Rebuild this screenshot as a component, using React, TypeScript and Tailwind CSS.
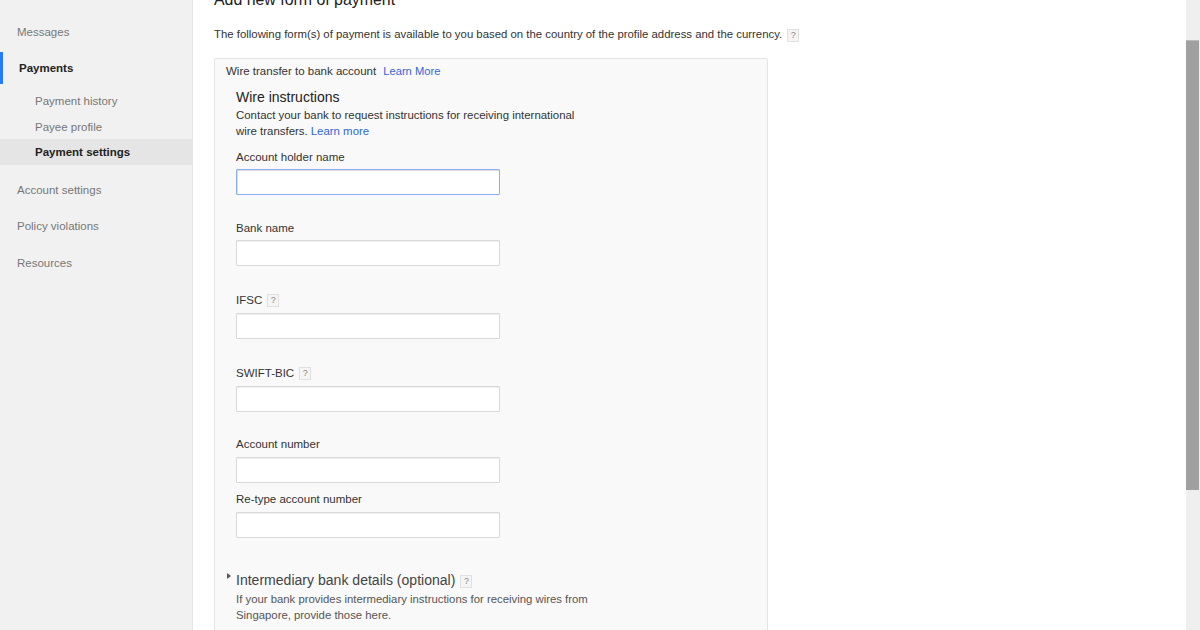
import type { ReactNode } from 'react'

const FONT = "font-['Liberation_Sans',Arial,sans-serif]"

function HelpIcon() {
    return (
        <span className="inline-flex h-[13px] w-[12px] items-center justify-center border border-[#e0e0e0] bg-[#f5f5f5] text-[9px] leading-none text-[#888]">
            ?
        </span>
    )
}

function NavItem({ label, className }: { label: string; className: string }) {
    return <div className={`flex items-center pt-[2px] text-[11.5px] text-[#777] ${className}`}>{label}</div>
}

function Field({ label, help, labelClass, children }: { label: string; help?: boolean; labelClass: string; children?: ReactNode }) {
    return (
        <div className={labelClass}>
            <div className="flex h-[14px] items-center gap-[5px] text-[11.5px] leading-[14px] text-[#333]">
                {label}
                {help && <HelpIcon />}
            </div>
            {children}
        </div>
    )
}

function TextBox({ focused, className }: { focused?: boolean; className: string }) {
    const border = focused
        ? 'border-[#8aaef5] shadow-[inset_1px_1px_1px_#ddd]'
        : 'border-[#d9d9d9] shadow-[inset_0_1px_0_#f0f0f0]'
    return <div className={`h-[26px] w-[264px] rounded-[1px] border bg-white ${border} ${className}`} />
}

export default function App() {
    return (
        <div className={`flex h-[630px] w-[1200px] overflow-hidden bg-white ${FONT}`}>
            {/* Sidebar */}
            <aside className="h-full w-[193px] shrink-0 border-r border-[#e5e5e5] bg-[#f1f1f1] pt-[20px]">
                <NavItem label="Messages" className="h-[24px] pl-[17px]" />
                <div className="mt-[8px] flex h-[32px] items-center border-l-[3px] border-[#2a7bf0] pl-[16px] pt-[2px] text-[11.5px] font-bold text-[#222]">
                    Payments
                </div>
                <NavItem label="Payment history" className="mt-[4px] h-[26px] pl-[35px]" />
                <NavItem label="Payee profile" className="h-[25px] pl-[35px]" />
                <div className="flex h-[26px] items-center bg-[#e5e5e5] pl-[35px] pt-[2px] text-[11.5px] font-bold text-[#222]">
                    Payment settings
                </div>
                <NavItem label="Account settings" className="mt-[12px] h-[26px] pl-[17px]" />
                <NavItem label="Policy violations" className="mt-[10px] h-[26px] pl-[17px]" />
                <NavItem label="Resources" className="mt-[11px] h-[26px] pl-[17px]" />
            </aside>

            {/* Main content */}
            <main className="min-w-0 flex-1 pl-[21px]">
                <h2 className="-mt-[10px] h-[20px] text-[15.9px] font-normal leading-[20px] text-[#222]">Add new form of payment</h2>
                <p className="mt-[18px] flex h-[14px] items-center gap-[5px] text-[11.38px] text-[#333]">
                    The following form(s) of payment is available to you based on the country of the profile address and the currency.
                    <HelpIcon />
                </p>

                <section className="mt-[16px] h-[620px] w-[554px] rounded-t-[2px] border border-[#e5e5e5] bg-[#f9f9f9] pl-[11px] pt-[5px]">
                    <div className="flex h-[14px] items-center text-[11.5px] leading-[14px] text-[#333]">
                        Wire transfer to bank account
                        <a className="ml-[7px] text-[11.2px] text-[#3367d6]">Learn More</a>
                    </div>

                    <div className="pl-[10px]">
                        <h3 className="mt-[9px] h-[20px] text-[14px] font-normal leading-[20px] text-[#222]">Wire instructions</h3>
                        <div className="text-[11.43px] leading-[16px] text-[#333]">
                            <div>Contact your bank to request instructions for receiving international</div>
                            <div className="flex gap-[3px]">
                                <span>wire transfers.</span>
                                <a className="text-[#3367d6]">Learn more</a>
                            </div>
                        </div>

                        <Field label="Account holder name" labelClass="mt-[11px]">
                            <TextBox focused className="mt-[5px]" />
                        </Field>
                        <Field label="Bank name" labelClass="mt-[26px]">
                            <TextBox className="mt-[5px]" />
                        </Field>
                        <Field label="IFSC" help labelClass="mt-[27px]">
                            <TextBox className="mt-[6px]" />
                        </Field>
                        <Field label="SWIFT-BIC" help labelClass="mt-[27px]">
                            <TextBox className="mt-[6px]" />
                        </Field>
                        <Field label="Account number" labelClass="mt-[25px]">
                            <TextBox className="mt-[6px]" />
                        </Field>
                        <Field label="Re-type account number" labelClass="mt-[9px]">
                            <TextBox className="mt-[6px]" />
                        </Field>

                        <div className="relative mt-[32px]">
                            <span className="absolute -left-[9px] top-[3px] h-0 w-0 border-y-[3px] border-l-[4px] border-y-transparent border-l-[#555]" />
                            <div className="flex h-[20px] items-center gap-[5px] pt-[2px] text-[14.05px] text-[#444]">
                                Intermediary bank details (optional)
                                <HelpIcon />
                            </div>
                        </div>
                        <div className="mt-[1px] text-[11.35px] leading-[16px] text-[#555]">
                            <div>If your bank provides intermediary instructions for receiving wires from</div>
                            <div>Singapore, provide those here.</div>
                        </div>
                    </div>
                </section>
            </main>

            {/* Scrollbar */}
            <div className="h-full w-[14px] shrink-0 bg-[#efefef]">
                <div className="mt-[40px] h-[450px] w-[13px] border-t border-[#bbb] bg-[#a0a0a0]" />
            </div>
        </div>
    )
}
